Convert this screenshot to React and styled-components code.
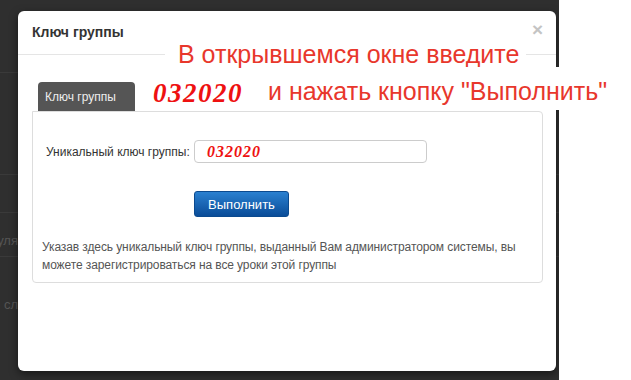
import React from 'react'
import styled, { createGlobalStyle } from 'styled-components'

const GlobalStyle = createGlobalStyle`
    html, body {
        margin: 0;
        padding: 0;
        width: 631px;
        height: 380px;
        overflow: hidden;
        background: #ffffff;
        font-family: "Liberation Sans", Arial, sans-serif;
    }
`;

const Screen = styled.div`
    position: relative;
    display: flex;
    width: 631px;
    height: 380px;
`;

const Backdrop = styled.div`
    position: relative;
    width: 559px;
    height: 380px;
    background: #2f2f2f;
    display: flex;
    flex-direction: column;
    overflow: hidden;
`;

const BehindRow = styled.div`
    height: ${(p) => p.h}px;
    flex: ${(p) => (p.h ? 'none' : 1)};
    border-bottom: ${(p) => (p.h ? '1px solid #3a3a3a' : 'none')};
    display: flex;
    align-items: ${(p) => p.align || 'center'};
    box-sizing: border-box;
`;

const BehindText = styled.div`
    width: 18px;
    overflow: hidden;
    display: flex;
    justify-content: flex-end;
    white-space: nowrap;
    font-size: 13px;
    color: #555555;
    margin-top: ${(p) => p.mt || 0}px;
    margin-bottom: ${(p) => p.mb || 0}px;
`;

const Blank = styled.div`
    flex: 1;
    background: #ffffff;
`;

const Modal = styled.div`
    position: absolute;
    left: 18px;
    top: 11px;
    width: 538px;
    height: 360px;
    background: #ffffff;
    border-radius: 6px;
    box-shadow: 0 3px 9px rgba(0, 0, 0, 0.5);
    display: flex;
    flex-direction: column;
`;

const Header = styled.div`
    height: 43px;
    padding: 0 13px 0 14px;
    display: flex;
    align-items: center;
    justify-content: space-between;
    border-bottom: 1px solid #e5e5e5;
`;

const Title = styled.div`
    font-size: 14px;
    font-weight: bold;
    color: #333333;
    margin-top: -2px;
`;

const Close = styled.div`
    font-size: 19px;
    font-weight: bold;
    color: #c4c4c4;
    line-height: 1;
    margin-top: -7px;
`;

const Body = styled.div`
    padding: 27px 13px 0 14px;
`;

const TabBar = styled.div`
    display: flex;
    padding-left: 6px;
`;

const Tab = styled.div`
    width: 97px;
    height: 29px;
    box-sizing: border-box;
    padding-left: 7px;
    line-height: 30px;
    background: #555555;
    color: #eeeeee;
    font-size: 12px;
    border-radius: 4px 4px 0 0;
`;

const Panel = styled.div`
    height: 172px;
    box-sizing: border-box;
    border: 1px solid #dddddd;
    border-radius: 0 4px 4px 4px;
    padding-top: 28px;
`;

const FormRow = styled.div`
    display: flex;
    align-items: center;
`;

const Label = styled.label`
    width: 148px;
    padding-left: 13px;
    font-size: 12px;
    color: #333333;
`;

const KeyInput = styled.div`
    width: 233px;
    height: 23px;
    box-sizing: border-box;
    border: 1px solid #cccccc;
    border-radius: 4px;
    padding-left: 12px;
    display: flex;
    align-items: center;
`;

const KeyValue = styled.span`
    font-family: "Liberation Serif", "Times New Roman", serif;
    font-style: italic;
    font-weight: bold;
    color: #ee1111;
    font-size: ${(p) => p.size}px;
    letter-spacing: ${(p) => p.spacing}px;
`;

const ActionRow = styled.div`
    padding-left: 161px;
    margin-top: 28px;
`;

const Button = styled.button`
    width: 95px;
    height: 26px;
    border: 1px solid #0b4a8f;
    border-radius: 3px;
    background: linear-gradient(to bottom, #2a80d0 0%, #0a4c98 100%);
    color: #ffffff;
    font-family: "Liberation Sans", Arial, sans-serif;
    font-size: 13px;
    padding: 0;
`;

const Help = styled.p`
    margin: 21px 0 0 0;
    padding: 0 4px 0 9px;
    font-size: 12px;
    line-height: 18px;
    letter-spacing: -0.1px;
    color: #555555;
`;

const Note = styled.div`
    position: absolute;
    left: ${(p) => p.x}px;
    top: ${(p) => p.y}px;
    width: ${(p) => p.w}px;
    height: ${(p) => p.h}px;
    box-sizing: border-box;
    padding: ${(p) => p.pad};
    background: #ffffff;
    white-space: nowrap;
    font-size: 25px;
    line-height: 30px;
    color: #e8372c;
`;

const App = () => {
    return (
        <>
            <GlobalStyle />
            <Screen>
                <Backdrop>
                    <BehindRow h={73} />
                    <BehindRow h={102} />
                    <BehindRow h={38} />
                    <BehindRow h={44} align="flex-end">
                        <BehindText mb={8}>модуля</BehindText>
                    </BehindRow>
                    <BehindRow align="flex-start">
                        <BehindText mt={40}>ия сл</BehindText>
                    </BehindRow>

                    <Modal>
                        <Header>
                            <Title>Ключ группы</Title>
                            <Close>×</Close>
                        </Header>
                        <Body>
                            <TabBar>
                                <Tab>Ключ группы</Tab>
                            </TabBar>
                            <Panel>
                                <FormRow>
                                    <Label>Уникальный ключ группы:</Label>
                                    <KeyInput>
                                        <KeyValue size={16} spacing={1}>032020</KeyValue>
                                    </KeyInput>
                                </FormRow>
                                <ActionRow>
                                    <Button type="button">Выполнить</Button>
                                </ActionRow>
                                <Help>
                                    Указав здесь уникальный ключ группы, выданный Вам администратором системы, вы
                                    можете зарегистрироваться на все уроки этой группы
                                </Help>
                            </Panel>
                        </Body>
                    </Modal>
                </Backdrop>
                <Blank />

                <Note x={165} y={37} w={361} h={30} pad="2px 0 0 13px">
                    В открывшемся окне введите
                </Note>
                <Note x={143} y={76} w={110} h={34} pad="2px 0 0 10px">
                    <KeyValue size={27} spacing={1.5}>032020</KeyValue>
                </Note>
                <Note x={253} y={67} w={378} h={43} pad="9px 0 0 15px">
                    и нажать кнопку "Выполнить"
                </Note>
            </Screen>
        </>
    )
}

export default App
